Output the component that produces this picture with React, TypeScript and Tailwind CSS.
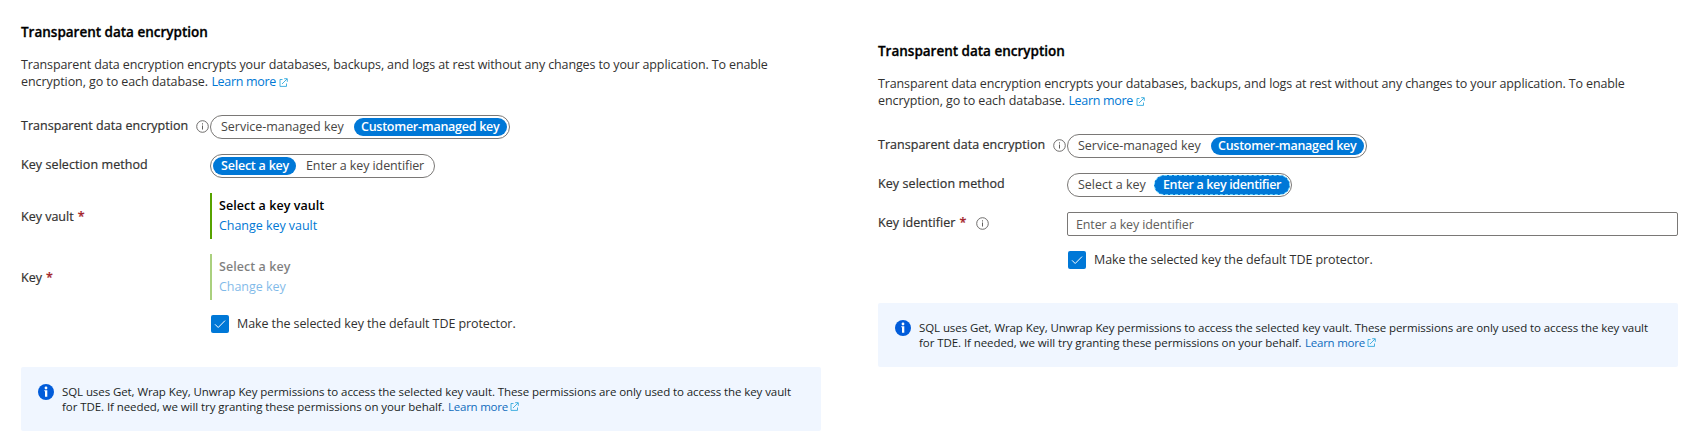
import type { ReactNode } from "react";

function ExternalIcon({ className }: { className: string }) {
  return (
    <svg viewBox="0 0 9 9" fill="none" stroke="#32a9dc" strokeWidth="0.9" className={`h-[9px] w-[9px] ${className}`}>
      <path d="M3.5 1.5H1v6.9h6.5V5.5M3 6l5-5M5.2.7h3.1v3.1" />
    </svg>
  );
}

function InfoOutline() {
  return (
    <svg viewBox="0 0 13 13" fill="none" stroke="#605e5c" className="h-[13px] w-[13px]">
      <circle cx="6.5" cy="6.5" r="5.8" strokeWidth="0.9" />
      <path d="M6.5 5.5v4M6.5 3.3v1.2" />
    </svg>
  );
}

function Heading() {
  return <h2 className="h-[18px] text-[13.5px] leading-[18px] font-semibold tracking-[-0.01px] text-black [-webkit-text-stroke:0.3px]">Transparent data encryption</h2>;
}

function Intro() {
  return (
    <div className="mt-[15px] leading-[17px] text-[#323130]">
      <p className="tracking-[-0.122px]">
        Transparent data encryption encrypts your databases, backups, and logs at rest without any changes to your application. To enable
      </p>
      <p className="flex">
        <span className="tracking-[-0.08px]">encryption, go to each database.</span>
        <a className="ml-[3.5px] tracking-[-0.32px] text-[#0078d4]">Learn more</a>
        <ExternalIcon className="mt-[5px] ml-[3px]" />
      </p>
    </div>
  );
}

function Row({ label, className, children }: { label: ReactNode; className: string; children: ReactNode }) {
  return (
    <div className={`mt-[15px] flex ${className}`}>
      <div className="flex w-[189px] shrink-0 items-center text-[#323130] [-webkit-text-stroke:0.2px]">{label}</div>
      {children}
    </div>
  );
}

function Pill({ children }: { children: ReactNode }) {
  return <div className="flex h-6 items-center rounded-full border border-[#7a7876] text-[#484644]">{children}</div>;
}

function EncryptionRow() {
  return (
    <div className="mt-[25px] flex h-6">
      <div className="flex w-[189px] shrink-0 items-center pb-[2px] tracking-[0.03px] text-[#323130] [-webkit-text-stroke:0.2px]">
        Transparent data encryption
        <span className="ml-[7.5px]">
          <InfoOutline />
        </span>
      </div>
      <Pill>
        <span className="ml-[10px] w-[133px] tracking-[-0.02px]">Service-managed key</span>
        <span className="mr-[2px] flex h-[18px] w-[153px] items-center rounded-full bg-[#0078d7] pl-[7px] font-semibold tracking-[-0.26px] text-white">
          Customer-managed key
        </span>
      </Pill>
    </div>
  );
}

function Required() {
  return <span className="ml-[4px] font-semibold text-[#a4262c]">*</span>;
}

function Picker({ title, link, className }: { title: string; link: string; className: string }) {
  return (
    <div className={`border-l-2 border-[#57a300] pt-[3px] pl-[7px] leading-[20px] ${className}`}>
      <div className="font-semibold tracking-[0.06px] text-black">{title}</div>
      <a className="block tracking-[-0.04px] text-[#0078d4]">{link}</a>
    </div>
  );
}

function DefaultProtector() {
  return (
    <label className="mt-[15px] ml-[190px] flex h-[18px] items-center text-[#323130]">
      <span className="flex h-[18px] w-[18px] items-center justify-center rounded-[2px] bg-[#0078d7]">
        <svg viewBox="0 0 12 12" fill="none" stroke="#fff" className="h-3 w-3">
          <path d="M1 6.3 4.2 9.5 11 2.6" />
        </svg>
      </span>
      <span className="ml-[8px] pb-px tracking-[-0.092px]">Make the selected key the default TDE protector.</span>
    </label>
  );
}

function Banner() {
  return (
    <div className="mt-[34px] flex h-16 rounded-[2px] bg-[#f0f6ff] pt-[17px] pl-[17px] text-[11.5px] leading-[15px] text-[#201f1e]">
      <svg viewBox="0 0 16 16" className="h-4 w-4 shrink-0">
        <circle cx="8" cy="8" r="8" fill="#015cda" />
        <circle cx="8" cy="4" r="1.4" fill="#fff" />
        <path d="M6.3 6.3h3v6.4h-2.3V7.3h-.7z" fill="#fff" />
      </svg>
      <div className="ml-[8px]">
        <p className="tracking-[-0.084px]">
          SQL uses Get, Wrap Key, Unwrap Key permissions to access the selected key vault. These permissions are only used to access the key vault
        </p>
        <p className="flex">
          <span className="tracking-[-0.073px]">for TDE. If needed, we will try granting these permissions on your behalf.</span>
          <a className="ml-[3.5px] tracking-[-0.25px] text-[#0f6cbd]">Learn more</a>
          <ExternalIcon className="mt-[3px] ml-[2px]" />
        </p>
      </div>
    </div>
  );
}

export default function App() {
  return (
    <main className="flex h-[440px] w-[1691px] overflow-hidden bg-white pl-[21px] font-['Open_Sans',sans-serif] text-[12.5px] leading-[18px] whitespace-nowrap">
      <section className="w-[800px] pt-[23px]">
        <Heading />
        <Intro />
        <EncryptionRow />
        <Row className="h-6" label={<span className="pb-[2px] tracking-[0.08px]">Key selection method</span>}>
          <Pill>
            <span className="ml-[2px] flex h-[18px] w-[83px] items-center rounded-full bg-[#0078d7] pl-[8px] font-semibold tracking-[-0.22px] text-white">
              Select a key
            </span>
            <span className="mr-[10px] ml-[10px] w-[118px] tracking-[-0.1px]">Enter a key identifier</span>
          </Pill>
        </Row>
        <Row className="h-[46px]" label={<span className="pt-[2px]">Key vault<Required /></span>}>
          <Picker title="Select a key vault" link="Change key vault" className="" />
        </Row>
        <Row className="h-[46px]" label={<span className="pt-[2px]">Key<Required /></span>}>
          <Picker title="Select a key" link="Change key" className="opacity-50" />
        </Row>
        <DefaultProtector />
        <Banner />
      </section>
      <section className="ml-[57px] w-[800px] pt-[42px]">
        <Heading />
        <Intro />
        <EncryptionRow />
        <Row className="h-6" label={<span className="pb-[2px] tracking-[0.08px]">Key selection method</span>}>
          <Pill>
            <span className="ml-[10px] w-[76px]">Select a key</span>
            <span className="mr-px flex h-5 w-[136px] items-center rounded-full border border-dashed border-[#5fd3ff] bg-[#0078d7] pl-[8px] font-semibold tracking-[-0.36px] text-white">
              Enter a key identifier
            </span>
          </Pill>
        </Row>
        <Row
          className="h-6"
          label={
            <span className="flex items-center pb-[2px]">
              <span className="tracking-[0.05px]">Key identifier</span>
              <Required />
              <span className="ml-[10px]">
                <InfoOutline />
              </span>
            </span>
          }
        >
          <div className="flex h-6 flex-1 items-center rounded-[2px] border border-[#7a7876] pt-px pl-[8px] tracking-[-0.12px] text-[#605e5c]">
            Enter a key identifier
          </div>
        </Row>
        <DefaultProtector />
        <Banner />
      </section>
    </main>
  );
}
